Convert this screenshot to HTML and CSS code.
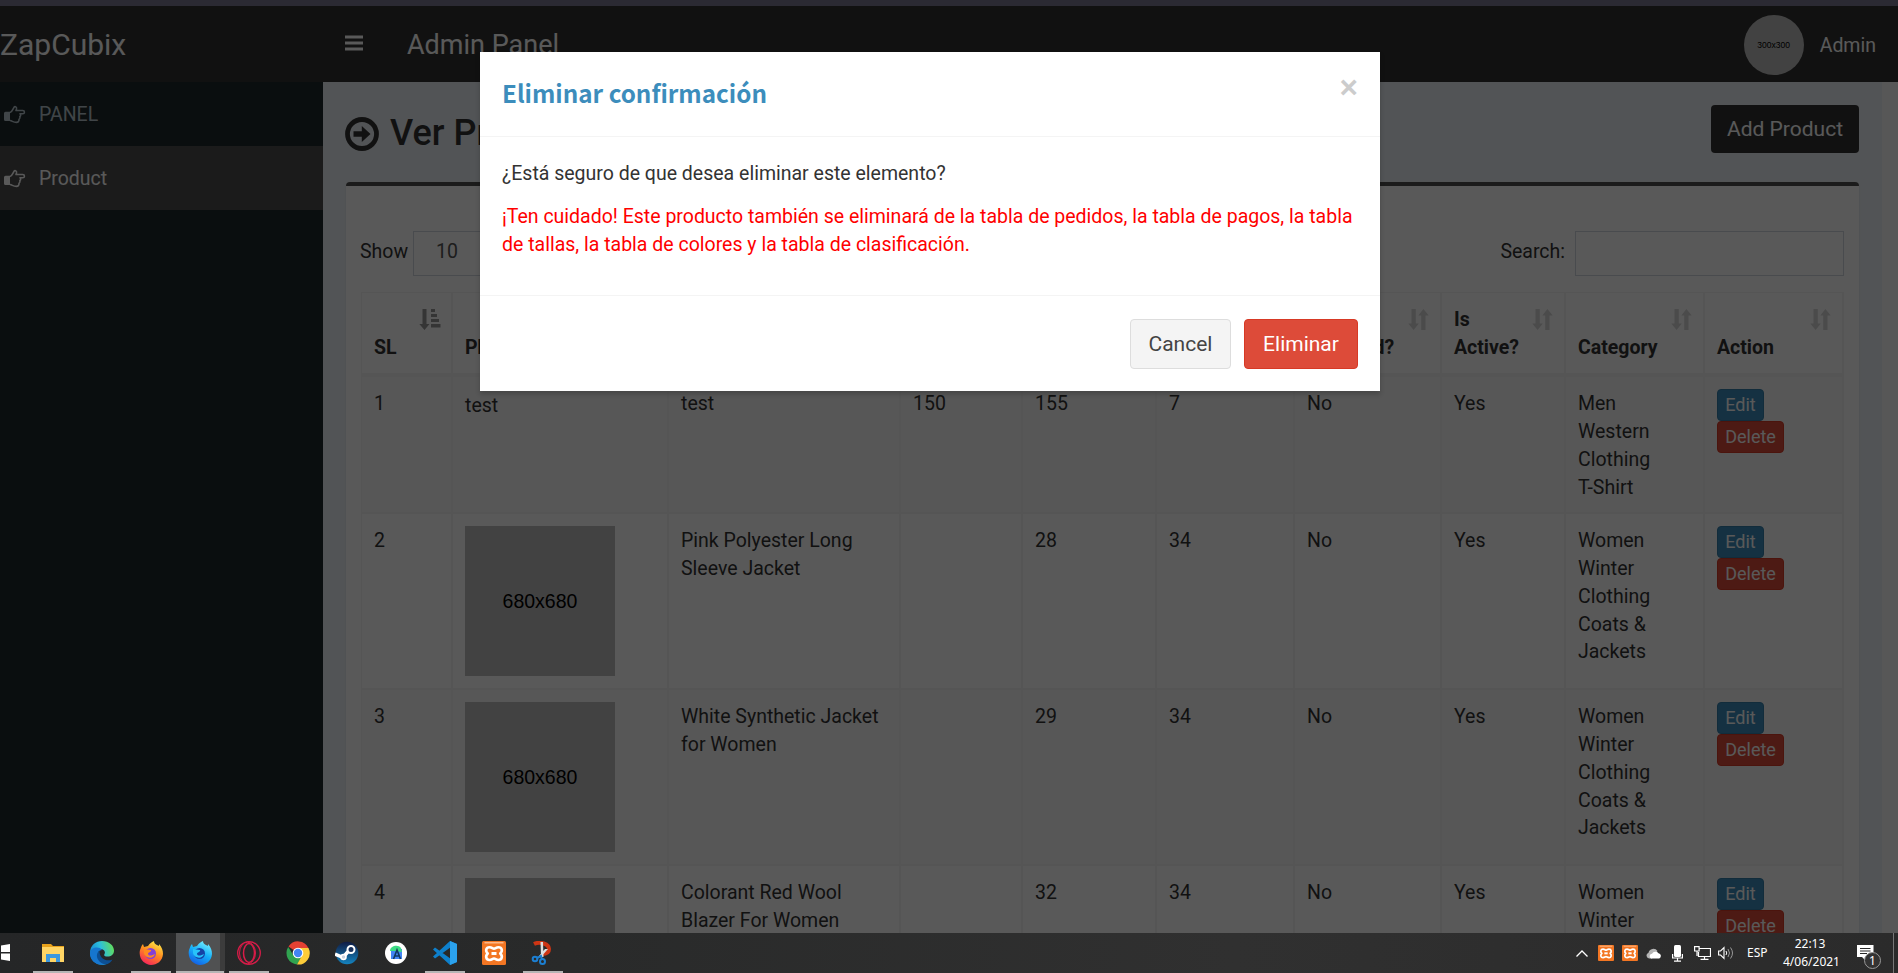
FILE: index.html
```
<!DOCTYPE html>
<html lang="es">
<head>
<meta charset="utf-8">
<title>Admin Panel</title>
<link rel="stylesheet" href="styles.css">
</head>
<body>
<svg class="defs" width="0" height="0">
  <symbol id="hand" viewBox="0 0 22 19"><path d="M6 7.500C8 7 9 4 10 2.300 11 1 13 2 12.500 4L12 5.500h6.700c2.300 0 2.300 3.300 0 3.300h-2.700c1 1 .8 2.200-.2 2.800.6 1.200 0 2.200-.8 2.800.2 2-1 3-2.500 3C9 17.300 8.500 16 6 15.500" fill="none" stroke="currentColor" stroke-width="1.600" stroke-linejoin="round"/><path d="M1.500 6.800H6V16H1.500A1.500 1.500 0 0 1 0 14.500V8.300a1.500 1.500 0 0 1 1.500-1.500z" fill="currentColor"/></symbol>
  <symbol id="sort" viewBox="0 0 22 21"><path d="M3.500 0h4.300v14.500h3L5.600 21 .3 14.500h3.200zM13.200 21h4.300V6.500h3.200L15.400 0l-5 6.500h2.800z" fill="currentColor"/></symbol>
  <symbol id="sortasc" viewBox="0 0 22 21"><path d="M3.500 0h4v15h3L5.500 21 .3 15h3.200zM12 0h4v3h-4zM12 5h6v3h-6zM12 10h8v3h-8zM12 15h9.500v3.500H12z" fill="currentColor"/></symbol>
  <symbol id="xampp" viewBox="0 0 24 24"><rect width="24" height="24" rx="1.500" fill="#f37623"/><path d="M2.500 1.800h19" stroke="#ffc9a0" stroke-width="1.200"/><path d="M5.800 12.500C3 10 4 6.200 7.500 6.200c2.500 0 3 1.500 4.500 1.500s2-1.500 4.500-1.500c3.500 0 4.500 3.800 1.700 6.300 2.800 2.500 1.800 6.500-1.700 6.500-2.500 0-3-1.500-4.500-1.500S10 19 7.500 19C4 19 3 15 5.800 12.500z" fill="none" stroke="#fff" stroke-width="2.600" stroke-linejoin="round"/><path d="M9.500 12.500h5" stroke="#fff" stroke-width="3"/></symbol>
</svg>
<div class="screen">
  <div class="page">
    <div class="browser-edge"></div>
    <header class="topbar">
      <div class="brand">ZapCubix</div>
      <svg class="burger" width="18" height="16" viewBox="0 0 18 16"><path d="M0 2h18M0 8h18M0 14h18" stroke="currentColor" stroke-width="3.200"/></svg>
      <div class="panel-name">Admin Panel</div>
      <div class="user"><span class="avatar">300x300</span><span>Admin</span></div>
    </header>
    <div class="main">
      <nav class="sidebar">
        <a class="item"><svg width="22" height="19"><use href="#hand"/></svg><span>PANEL</span></a>
        <a class="item current"><svg width="22" height="19"><use href="#hand"/></svg><span>Product</span></a>
      </nav>
      <section class="content">
        <div class="heading">
          <h1><svg width="34" height="34" viewBox="0 0 34 34"><circle cx="17" cy="17" r="14.500" fill="none" stroke="currentColor" stroke-width="4.800"/><path d="M8.500 14.200h8.300V9L25.500 17l-8.700 8v-5.200H8.500z" fill="currentColor"/></svg>Ver Products</h1>
          <a class="add">Add Product</a>
        </div>
        <div class="box">
          <div class="tools">
            <div class="length">Show<span class="select">10</span></div>
            <div class="search">Search:<span class="input"></span></div>
          </div>
          <table>
            <colgroup><col class="c1"><col class="c2"><col class="c3"><col class="c4"><col class="c5"><col class="c6"><col class="c7"><col class="c8"><col class="c9"><col class="c10"></colgroup>
            <thead><tr>
              <th><svg class="on"><use href="#sortasc"/></svg>SL</th>
              <th>Photo</th><th></th><th></th><th></th><th></th>
              <th><svg><use href="#sort"/></svg>Featured?</th>
              <th><svg><use href="#sort"/></svg>Is<br>Active?</th>
              <th><svg><use href="#sort"/></svg>Category</th>
              <th><svg><use href="#sort"/></svg>Action</th>
            </tr></thead>
            <tbody>
              <tr class="odd first"><td>1</td><td><span class="alt">test</span></td><td>test</td><td>150</td><td>155</td><td>7</td><td>No</td><td>Yes</td><td>Men<br>Western<br>Clothing<br>T-Shirt</td><td><a class="btn-xs edit">Edit</a><a class="btn-xs del">Delete</a></td></tr>
              <tr><td>2</td><td><span class="photo">680x680</span></td><td>Pink Polyester Long Sleeve Jacket</td><td></td><td>28</td><td>34</td><td>No</td><td>Yes</td><td>Women<br>Winter<br>Clothing<br>Coats &amp;<br>Jackets</td><td><a class="btn-xs edit">Edit</a><a class="btn-xs del">Delete</a></td></tr>
              <tr class="odd"><td>3</td><td><span class="photo">680x680</span></td><td>White Synthetic Jacket for Women</td><td></td><td>29</td><td>34</td><td>No</td><td>Yes</td><td>Women<br>Winter<br>Clothing<br>Coats &amp;<br>Jackets</td><td><a class="btn-xs edit">Edit</a><a class="btn-xs del">Delete</a></td></tr>
              <tr><td>4</td><td><span class="photo"></span></td><td>Colorant Red Wool Blazer For Women</td><td></td><td>32</td><td>34</td><td>No</td><td>Yes</td><td>Women<br>Winter</td><td><a class="btn-xs edit">Edit</a><a class="btn-xs del">Delete</a></td></tr>
            </tbody>
          </table>
        </div>
      </section>
      <div class="gutter"></div>
    </div>
  </div>
  <div class="backdrop"></div>
  <div class="modal">
    <div class="modal-head"><h4>Eliminar confirmación</h4><span class="close">×</span></div>
    <div class="modal-body">
      <p>¿Está seguro de que desea eliminar este elemento?</p>
      <p class="warn">¡Ten cuidado! Este producto también se eliminará de la tabla de pedidos, la tabla de pagos, la tabla de tallas, la tabla de colores y la tabla de clasificación.</p>
    </div>
    <div class="modal-foot"><a class="btn">Cancel</a><a class="btn danger">Eliminar</a></div>
  </div>
  <footer class="taskbar">
    <div class="apps">
      <span class="start"><svg width="10" height="20" viewBox="0 0 10 20"><path d="M1 2.500l9-1.500v8H1zM1 10.500h9v7.500L1 16.500z" fill="#fff"/></svg></span>
      <span class="app run"><svg viewBox="0 0 24 24"><path d="M1 3h9l2 2h11v16H1z" fill="#e8a21c"/><path d="M1 6h22v15H1z" fill="#ffd565"/><path d="M5 13h14v8h-4v-4H9v4H5z" fill="#3c98de"/></svg></span>
      <span class="app"><svg viewBox="0 0 24 24"><defs><linearGradient id="eg" x1="0" y1=".6" x2="1" y2=".3"><stop offset="0" stop-color="#1583d0"/><stop offset=".5" stop-color="#2cbfdc"/><stop offset="1" stop-color="#62dd5a"/></linearGradient></defs><path d="M0 12C0 4 6 0 12 0c7 0 12 4.500 12 9.500 0 4-3 6-6.500 6-2.500 0-4-1-3-2.500C16 10 13 7.500 9.500 8 6 8.500 6 20 18 22 10 27 0 21 0 12z" fill="url(#eg)"/><path d="M0 12c1-6 9-7 12-3C5 9 6 21 16 23.300 7 25.500 0 20 0 12z" fill="#1676cf"/><path d="M9.500 9.500C4 14 8 22.500 16 23.500c3-.7 5-2.500 6.500-5C17 21 9 18 9.500 9.500z" fill="#0c4f94"/></svg></span>
      <span class="app run"><svg viewBox="0 0 24 24"><defs><linearGradient id="ff" x1=".8" y1="0" x2=".3" y2="1"><stop offset="0" stop-color="#fff04a"/><stop offset=".5" stop-color="#ff8a1f"/><stop offset="1" stop-color="#f5225c"/></linearGradient></defs><path d="M1 9c1-2 1-4 3-6l1 3 4-1c2-3 4-4 6-5 0 3 3 4 5 5V3c3 3 4 7 4 10-.5 7-6 11-12 11S-1 18 1 9z" fill="url(#ff)"/><circle cx="11.500" cy="12.500" r="5.500" fill="#8340d8"/><path d="M5 8l7 1c1 2-3 2-3 4 1 3 5 1 7 0-2 6-10 4-11-1z" fill="#ff8a1f"/></svg></span>
      <span class="app run active"><svg viewBox="0 0 24 24"><defs><linearGradient id="fd" x1=".8" y1="0" x2=".3" y2="1"><stop offset="0" stop-color="#7df4ff"/><stop offset=".5" stop-color="#15b0fa"/><stop offset="1" stop-color="#145de4"/></linearGradient></defs><path d="M1 9c1-2 1-4 3-6l1 3 4-1c2-3 4-4 6-5 0 3 3 4 5 5V3c3 3 4 7 4 10-.5 7-6 11-12 11S-1 18 1 9z" fill="url(#fd)"/><circle cx="11.500" cy="12.500" r="5.500" fill="#1543a6"/><path d="M5 8l7 1c1 2-3 2-3 4 1 3 5 1 7 0-2 6-10 4-11-1z" fill="#28c3fa"/></svg></span>
      <span class="app run"><svg viewBox="0 0 24 24"><g fill="none" stroke="#d81c48"><circle cx="12" cy="12" r="11.300" stroke-width="1.300"/><ellipse cx="12" cy="12" rx="5.500" ry="9.500" stroke-width="1.500"/><ellipse cx="10.500" cy="12" rx="8" ry="10.800" stroke-width="1"/></g></svg></span>
      <span class="app"><svg viewBox="0 0 24 24"><path d="M12 12L2.500 5.500A11.500 11.500 0 0 1 22.500 7H12z" fill="#e34133"/><path d="M12 12L7.500 14.500 2.200 6A11.500 11.500 0 0 0 11 23.500L16 15z" fill="#30a350"/><path d="M12 7h10.500A11.500 11.500 0 0 1 11 23.500l5-9z" fill="#fccc3a"/><circle cx="12" cy="12" r="5.300" fill="#fff"/><circle cx="12" cy="12" r="4.200" fill="#4285f4"/></svg></span>
      <span class="app"><svg viewBox="0 0 24 24"><defs><linearGradient id="st" x2="0" y2="1"><stop stop-color="#101b43"/><stop offset="1" stop-color="#1484c0"/></linearGradient></defs><circle cx="12" cy="12" r="11.300" fill="url(#st)"/><path d="M0 13l8 3.500 6-7" stroke="#fff" stroke-width="3.500" fill="none"/><circle cx="16" cy="8.500" r="3.500" fill="#17305c" stroke="#fff" stroke-width="2"/><circle cx="8.500" cy="16" r="2.500" fill="#c9d3e0" stroke="#fff" stroke-width="1.600"/></svg></span>
      <span class="app"><svg viewBox="0 0 24 24"><circle cx="12" cy="12" r="11" fill="#fff"/><path d="M7 8h11v10H7z" fill="#4285f4"/><path d="M6 10c0-5 8-7 11-3l1 4-7-1z" fill="#3ddc84"/><path d="M9.500 18l3.500-9 3.500 9M11 15h4.500" stroke="#123a61" stroke-width="1.600" fill="none"/></svg></span>
      <span class="app run"><svg viewBox="0 0 24 24"><path d="M17 0l7 3v18l-7 3L0 8.500l2-2L18 18V6L2 17.500l-2-2z" fill="#0e80cc"/><path d="M17 0l7 3v18l-7 3z" fill="#2ba2ee"/></svg></span>
      <span class="app"><svg viewBox="0 0 24 24"><use href="#xampp"/></svg></span>
      <span class="app run"><svg viewBox="0 0 24 24"><path d="M3 3c6-3 15 0 15 5 0 4-4 5-7 5" fill="none" stroke="#ce3514" stroke-width="4"/><path d="M9.500 1h2.500l.5 15H10zM17 8l-7 8-2-1 6-7z" fill="#ddd"/><g fill="none" stroke="#1c7fd2" stroke-width="2"><circle cx="4" cy="18" r="2.300"/><circle cx="11.500" cy="20.500" r="2.500"/><path d="M6 17l4-2 1 3"/></g></svg></span>
    </div>
    <div class="tray">
      <svg class="t-up" width="12" height="7" viewBox="0 0 12 7"><path d="M.5 6.500L6 1l5.500 5.500" stroke="#fff" stroke-width="1.300" fill="none"/></svg>
      <svg class="t-x1" width="16" height="16" viewBox="0 0 24 24"><use href="#xampp"/></svg>
      <svg class="t-x2" width="16" height="16" viewBox="0 0 24 24"><use href="#xampp"/></svg>
      <svg class="t-cl" width="16" height="11" viewBox="0 0 16 11"><path d="M3 10.500a3 3 0 0 1-.5-5.800A5 5 0 0 1 11.500 3L6 10.500z" fill="#b4b4b4"/><path d="M5 10.500a2.500 2.500 0 0 1 1-4.700 4 4 0 0 1 6.500-.6 2.800 2.800 0 0 1 .8 5.300z" fill="#fff"/></svg>
      <svg class="t-mic" width="11" height="17" viewBox="0 0 11 17"><rect x="2" y="0" width="7" height="12" rx="1.500" fill="#fff"/><path d="M.6 9v4h9.800V9M5.500 13v3M2 16.200h7" stroke="#fff" stroke-width="1.200" fill="none"/></svg>
      <svg class="t-net" width="17" height="14" viewBox="0 0 17 14"><path d="M5.500 2.500h11v8h-12V6M10.500 10.500v3M6.500 13.400h8M.6.600h4.500V5H.6zM3 5v5" stroke="#fff" stroke-width="1.200" fill="none"/></svg>
      <svg class="t-vol" width="17" height="14" viewBox="0 0 17 14"><path d="M.6 5h2L6 1.500v11L2.600 9h-2z" stroke="#fff" stroke-width="1.100" fill="none"/><path d="M8 5q1.500 2 0 4" stroke="#fff" fill="none"/><path d="M10 3q3 4 0 8M12.500 1.500q4 5.500 0 11" stroke="#999" fill="none"/></svg>
      <span class="t-lang">ESP</span>
      <span class="t-clock">22:13<br>4/06/2021</span>
      <span class="t-note"><svg width="17" height="16" viewBox="0 0 17 16"><path d="M0 0h16.500v12H9v4l-4-4H0z" fill="#fff"/><path d="M3 3.500h10.500M3 6h10.500M3 8.500h7" stroke="#292929" stroke-width="1"/></svg><b>1</b></span>
      <span class="show-desktop"></span>
    </div>
  </footer>
</div>
</body>
</html>
```
FILE: styles.css
```
* { box-sizing: border-box; }
body { margin: 0; font-family: Roboto, sans-serif; font-size: 19.5px; line-height: 27.86px; color: #333; }
.defs { position: absolute; }
.screen { position: relative; width: 1898px; height: 973px; overflow: hidden; background: #fff; }
.page { height: 933px; overflow: hidden; display: flex; flex-direction: column; }
.browser-edge { height: 6px; flex: none; background: #2b2a33; position: relative; z-index: 3; }
.topbar { height: 76px; flex: none; background: #313131; color: #fff; display: flex; align-items: center; }
.brand { width: 345px; font-size: 30px; padding-top: 2px; }
.burger { margin-top: -2px; }
.panel-name { margin-left: 44px; font-size: 27px; padding-top: 4px; }
.user { margin-left: auto; margin-right: 22px; display: flex; align-items: center; gap: 15px; padding-top: 2px; }
.user > span:last-child { padding-top: 2px; }
.avatar { width: 60px; height: 60px; margin-right: 1px; border-radius: 50%; background: #bdbdbd; color: #000; font: 8.500px/60px "Liberation Sans", sans-serif; text-align: center; }
.main { flex: 1; display: flex; min-height: 0; }
.sidebar { width: 323px; flex: none; background: #1e282c; }
.item { height: 64px; display: flex; align-items: center; gap: 13px; padding-left: 4px; color: #b8c7ce; }
.item span { padding-top: 2px; }
.item.current { background: #4f4f4f; color: #fff; }
.content { width: 1559px; flex: none; background: #ecf0f5; padding: 23px 23px 0; }
.gutter { flex: 1; background: #f9f9f9; }
.heading { display: flex; justify-content: space-between; align-items: flex-start; height: 77px; }
h1 { margin: 8px 0 0 -1px; font-size: 36px; font-weight: 500; line-height: 40px; display: flex; align-items: center; gap: 11px; }
h1 svg { margin-top: 1px; }
.add { width: 148px; height: 48px; border-radius: 4px; background: #333; color: #fff; font-size: 21px; line-height: 48px; text-align: center; }
.box { background: #fff; border-top: 4px solid #4f4f4f; border-radius: 4px; padding: 45px 15px 0; height: 900px; box-shadow: 0 1px 2px rgba(0,0,0,.1); }
.tools { display: flex; justify-content: space-between; height: 61px; align-items: flex-start; }
.length, .search { display: flex; line-height: 42px; }
.length { margin-left: -1px; }
.select { margin-left: 5px; width: 112px; height: 45px; border: 1px solid #d2d6de; padding-left: 22px; line-height: 40px; color: #555; }
.input { margin-left: 10px; width: 269px; height: 45px; border: 1px solid #d2d6de; }
table { table-layout: fixed; border-collapse: separate; border-spacing: 0; width: 1483px; border-left: 1px solid #f4f4f4; border-top: 1px solid #f4f4f4; }
.c1 { width: 91px; } .c2 { width: 216px; } .c3 { width: 232px; } .c4 { width: 122px; } .c5 { width: 134px; }
.c6 { width: 138px; } .c7 { width: 147px; } .c8 { width: 124px; } .c9 { width: 139px; } .c10 { width: 139px; }
th, td { text-align: left; padding: 13px 12px 0; border-right: 2px solid #f4f4f4; border-bottom: 2px solid #f4f4f4; }
th { height: 84px; vertical-align: bottom; padding: 12px 12px 11px; border-bottom-width: 4px; font-weight: 700; position: relative; white-space: nowrap; overflow: hidden; }
th svg { position: absolute; right: 10px; top: 16px; width: 22px; height: 21px; color: #d6d6d6; }
th svg.on { color: #999; }
td { vertical-align: top; height: 176px; }
.first td { height: 137px; }
.odd td { background: #f9f9f9; }
td:nth-child(2), td:last-child, .first td:nth-child(2) { padding-top: 12px; }
.alt { display: block; padding-top: 3px; }
.photo { display: block; width: 150px; height: 150px; background: #bdbdbd; color: #000; text-align: center; line-height: 150px; font-family: "Liberation Sans", sans-serif; }
.btn-xs { display: block; height: 32px; width: 47px; border: 1px solid #367fa9; border-radius: 4px; background: #3c8dbc; color: #fff; font-size: 18px; line-height: 30px; text-align: center; }
.btn-xs.del { width: 67px; background: #dd4b39; border-color: #d73925; }
.backdrop { position: absolute; left: 0; top: 6px; width: 1898px; height: 927px; background: rgba(0,0,0,.65); }
.modal { position: absolute; left: 480px; top: 52px; width: 900px; height: 339px; background: #fff; box-shadow: 0 3px 5px rgba(0,0,0,.2); }
.modal-head { height: 85px; border-bottom: 1px solid #f4f4f4; padding: 22px; display: flex; justify-content: space-between; }
h4 { margin: -1px 0 0; font: 700 24.250px/40px "Noto Sans CJK SC", sans-serif; color: #3c8dbc; }
.close { font: 700 31.500px/26px "Liberation Sans", sans-serif; color: #ccc; }
.modal-body { height: 159px; border-bottom: 1px solid #f4f4f4; padding: 23px 22px; }
p { margin: 0 0 15px; }
.warn { color: #f00; }
.modal-foot { display: flex; justify-content: flex-end; gap: 13px; padding: 23px 22px; }
.btn { height: 50px; width: 101px; border: 1px solid #ddd; border-radius: 4px; background: #f4f4f4; color: #444; font-size: 21px; line-height: 48px; text-align: center; }
.btn.danger { width: 114px; background: #dd4b39; border-color: #d73925; color: #fff; }
.taskbar { height: 40px; background: linear-gradient(90deg, #252627, #292a2a 30%, #303030 65%, #2b2b2b); display: flex; justify-content: space-between; }
.apps { display: flex; }
.start { width: 29px; padding-top: 10px; }
.app { width: 49px; height: 40px; padding: 8px 0 0 11.500px; position: relative; }
.app svg { width: 24px; height: 24px; display: block; }
.app.run::after { content: ""; position: absolute; left: 4px; width: 40px; bottom: 0; height: 2px; background: #b5b5b5; }
.app.active { background: linear-gradient(90deg, #505152 44px, #3c3c3c 44px); }
.app.active::after { left: 0; width: 48px; }
.tray { display: flex; align-items: center; color: #fff; font-family: "Noto Sans", sans-serif; font-size: 12px; line-height: 18px; }
.t-up { margin-right: 10px; }
.t-x1, .t-x2 { margin-right: 8px; }
.t-cl { margin-right: 10px; }
.t-mic { margin-right: 11px; }
.t-net { margin-right: 7px; }
.t-vol { margin-right: 12px; }
.t-lang { width: 36px; }
.t-clock { width: 54px; text-align: center; }
.t-note { position: relative; width: 36px; height: 16px; margin-left: 20px; }
.t-note svg { display: block; }
.t-note b { position: absolute; left: 7px; top: 7px; width: 17px; height: 17px; border: 1px solid #999; border-radius: 50%; background: #333; font-weight: 400; line-height: 15px; text-align: center; }
.show-desktop { width: 5px; height: 40px; border-left: 1px solid #777; }
```
